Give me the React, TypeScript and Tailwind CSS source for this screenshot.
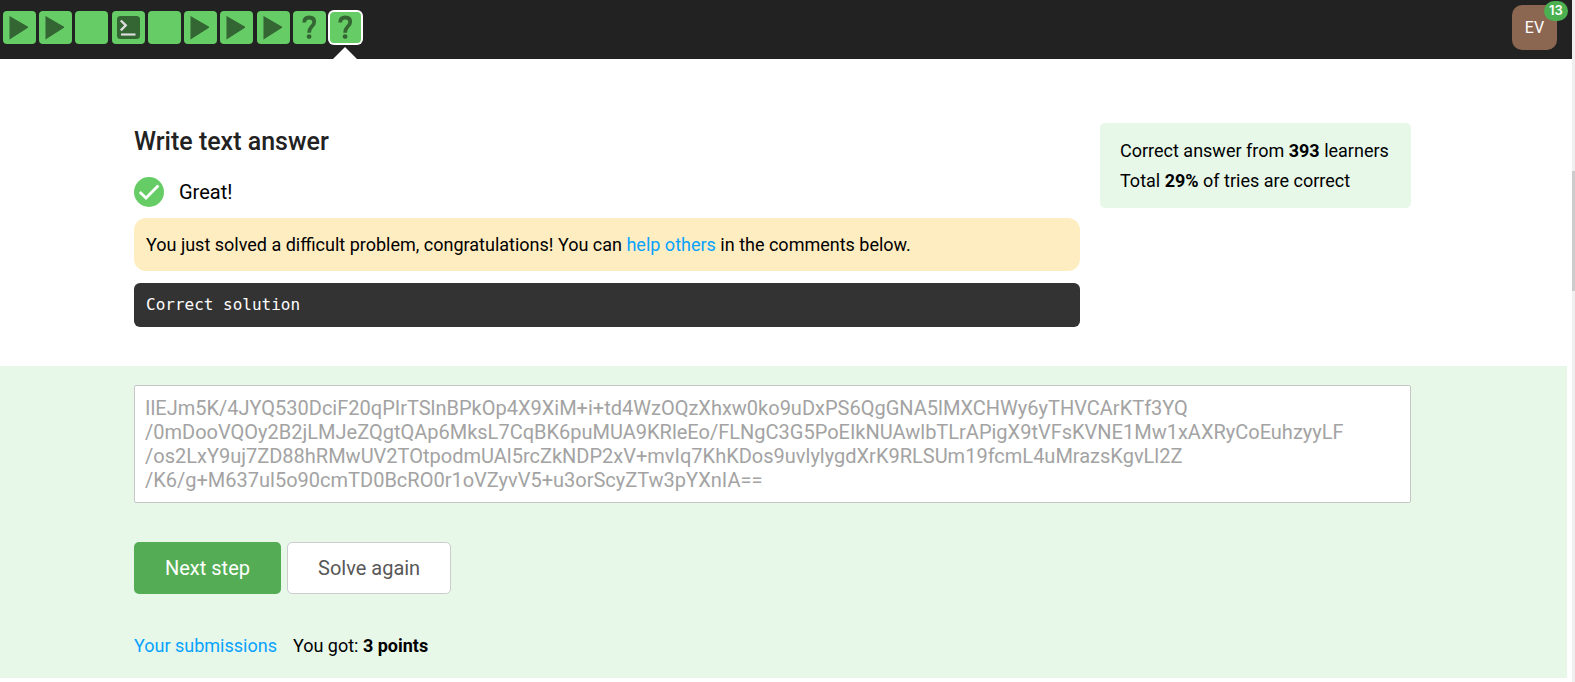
import React from "react";

type StepKind = "video" | "blank" | "code" | "quiz";

const steps: StepKind[] = ["video", "video", "blank", "code", "blank", "video", "video", "video", "quiz", "quiz"];

const answer = `IlEJm5K/4JYQ530DciF20qPIrTSlnBPkOp4X9XiM+i+td4WzOQzXhxw0ko9uDxPS6QgGNA5lMXCHWy6yTHVCArKTf3YQ
/0mDooVQOy2B2jLMJeZQgtQAp6MksL7CqBK6puMUA9KRleEo/FLNgC3G5PoEIkNUAwlbTLrAPigX9tVFsKVNE1Mw1xAXRyCoEuhzyyLF
/os2LxY9uj7ZD88hRMwUV2TOtpodmUAl5rcZkNDP2xV+mvIq7KhKDos9uvlylygdXrK9RLSUm19fcmL4uMrazsKgvLl2Z
/K6/g+M637ul5o90cmTD0BcRO0r1oVZyvV5+u3orScyZTw3pYXnIA==`;

function StepIcon({ kind }: { kind: StepKind }) {
  if (kind === "blank") return null;
  return (
    <svg viewBox="0 0 33 33" className="size-[33px] shrink-0" aria-hidden="true">
      {kind === "video" && (
        <>
          <path d="M6.5 5.5 L25 16.2 L6.5 28 Z" fill="#336633" stroke="#336633" strokeWidth="1" strokeLinejoin="round" />
          <path d="M6.5 5 V28" stroke="#4f944f" strokeWidth="1" />
        </>
      )}
      {kind === "code" && (
        <>
          <rect x="5" y="5" width="23" height="23" rx="3.5" fill="#336633" />
          <path d="M8.8 9.5 L13.8 14.3 L8.8 19.4" fill="none" stroke="#dcdcdc" strokeWidth="2.3" />
          <path d="M9 23.5 H23.5" stroke="#dcdcdc" strokeWidth="2.2" />
        </>
      )}
      {kind === "quiz" && (
        <>
          <path
            d="M11.2 11.4 C11.2 8.2 13.2 6.5 16.3 6.5 C19.5 6.5 21.2 8.2 21.2 10.9 C21.2 13.2 20 14.4 18.4 16 C16.7 17.7 16.1 18.6 16.1 21.8"
            fill="none"
            stroke="#336633"
            strokeWidth="3.8"
          />
          <circle cx="16.1" cy="25.6" r="2.4" fill="#336633" />
        </>
      )}
    </svg>
  );
}

function StepTile({ kind, active, index }: { kind: StepKind; active: boolean; index: number }) {
  return (
    <a
      href={`#step-${index}`}
      aria-label={`Step ${index}`}
      aria-current={active ? "step" : undefined}
      className={
        active
          ? "relative m-px flex size-[31px] items-center justify-center rounded-sm bg-[#66cc66] ring-2 ring-white"
          : "relative flex size-[33px] items-center justify-center rounded-sm bg-[#66cc66]"
      }
    >
      <StepIcon kind={kind} />
      {active && (
        <svg viewBox="0 0 24 12" className="absolute top-[35px] left-[3px] h-3 w-6" aria-hidden="true">
          <path d="M0 12 L12 0 L24 12 Z" fill="#fff" />
        </svg>
      )}
    </a>
  );
}

export default function App() {
  return (
    <div className="flex min-h-screen bg-white font-[Roboto,sans-serif] text-lg text-black">
      <div className="flex min-w-0 flex-1 flex-col">
        <header className="flex h-[59px] items-start justify-between bg-[#222222] pr-[15px] pl-[3px]">
          <nav aria-label="Lesson steps" className="flex w-[359px] justify-between pt-[11px]">
            {steps.map((kind, i) => (
              <StepTile key={i} kind={kind} index={i + 1} active={i === steps.length - 1} />
            ))}
          </nav>
          <button
            type="button"
            className="relative mt-[5px] flex size-[45px] items-center justify-center rounded-[10px] bg-[#8b6651] text-base text-white"
          >
            EV
            <span className="absolute -top-1 left-8 flex h-5 w-6 items-center justify-center rounded-full bg-[#4caf50] font-[Inter,sans-serif] text-[13px] font-semibold">
              13
            </span>
          </button>
        </header>

        <main>
          <section className="flex items-start gap-5 pt-16 pr-[161px] pb-[39px] pl-[134px]">
            <div className="min-w-0 flex-1">
              <h1 className="text-[25px] leading-[38px] font-medium text-[#222222]">Write text answer</h1>
              <div className="mt-4 flex items-center gap-[15px] text-xl leading-[30px]">
                <svg viewBox="0 0 30 30" className="size-[30px]" aria-hidden="true">
                  <circle cx="15" cy="15" r="15" fill="#66cc66" />
                  <path d="M5.8 15 L12 21 L24.4 8.4" fill="none" stroke="#fff" strokeWidth="2.8" />
                </svg>
                <p>Great!</p>
              </div>
              <p className="mt-[11px] rounded-xl bg-[#ffedc2] px-3 py-3 leading-[29px]">
                You just solved a difficult problem, congratulations! You can{" "}
                <a href="#comments" className="text-[#07a2ff]">
                  help others
                </a>{" "}
                in the comments below.
              </p>
              <pre className="mt-3 rounded-md bg-[#333333] px-3 py-2.5 font-['DejaVu_Sans_Mono',monospace] text-base text-white">
                Correct solution
              </pre>
            </div>
            <aside className="w-[311px] rounded-[5px] bg-[#e7f8e9] px-5 pt-[13px] pb-3 leading-[30px]">
              <p>
                Correct answer from <strong>393</strong> learners
              </p>
              <p>
                Total <strong>29%</strong> of tries are correct
              </p>
            </aside>
          </section>

          <section className="mr-[5px] bg-[#e7f8e9] pt-[19px] pr-[156px] pb-[18px] pl-[134px]">
            <textarea
              aria-label="Your answer"
              readOnly
              rows={4}
              value={answer}
              className="block w-full resize-none overflow-hidden rounded-xs border border-[#c6c6c6] bg-white px-2.5 py-2.5 text-xl leading-6 text-[#a3a3a3] outline-none"
            />
            <div className="mt-[39px] flex gap-1.5 text-xl">
              <button type="button" className="h-[52px] rounded-[5px] bg-[#54ad54] px-[31px] text-white">
                Next step
              </button>
              <button
                type="button"
                className="h-[52px] rounded-[5px] border border-[#cccccc] bg-white px-[30px] text-[#585858]"
              >
                Solve again
              </button>
            </div>
            <div className="mt-[37px] flex gap-4 leading-[29px]">
              <a href="#submissions" className="text-[#07a2ff]">
                Your submissions
              </a>
              <p>
                You got: <strong>3 points</strong>
              </p>
            </div>
          </section>
        </main>
      </div>

      <div className="w-[3px] bg-[#efefef] pt-[171px]" aria-hidden="true">
        <div className="h-[120px] bg-[#cccccc]" />
      </div>
    </div>
  );
}
